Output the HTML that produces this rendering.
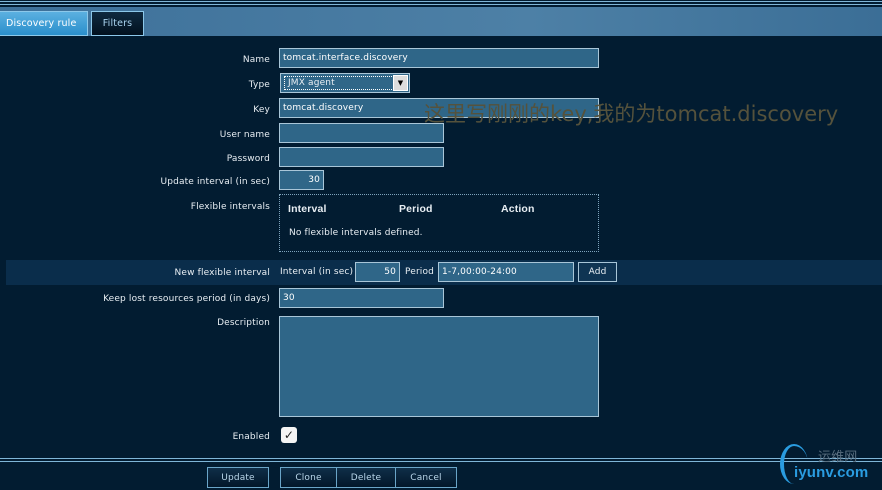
<!DOCTYPE html>
<html><head><meta charset="utf-8"><style>
*{margin:0;padding:0;box-sizing:border-box}
body{width:882px;height:490px;background:#021c31;font-family:"DejaVu Sans","Liberation Sans",sans-serif;font-size:9px;color:#e8eef3;position:relative;overflow:hidden;letter-spacing:0.15px}
.a{position:absolute}
.lbl{position:absolute;right:612px;text-align:right;white-space:nowrap;font-size:9px}
.in{position:absolute;background:#2f6688;border:1px solid #a9c6d8;color:#fff;font-size:9px;padding:0 3px;line-height:19px;white-space:nowrap}
.btn{position:absolute;top:467px;height:21px;border:1px solid #6aa5c8;background:linear-gradient(#0f2e48,#02172a);color:#b9d6ea;font-size:9px;text-align:center;line-height:20px}
</style></head><body>
<div class="a" style="left:0;top:1px;width:882px;height:1px;background:#7fb6d8"></div>
<div class="a" style="left:0;top:4px;width:882px;height:1px;background:#7fb6d8"></div>
<div class="a" style="left:0;top:7px;width:882px;height:29px;background:linear-gradient(90deg,#3d7099,#4d80a6 60%,#3b6e96)"></div>
<div class="a" style="left:0;top:11px;width:88px;height:25px;background:linear-gradient(#5bb0e0,#2a8fcc);border:1px solid #8cc8ea;border-left:none;color:#fff;font-size:9.5px;line-height:24px;padding-left:6px">Discovery rule</div>
<div class="a" style="left:91px;top:11px;width:53px;height:25px;background:linear-gradient(#0f2a40,#02111f);border:1px solid #8cc8ea;color:#a9d3ef;font-size:9.5px;line-height:24px;text-align:center">Filters</div>

<div class="lbl" style="top:55px">Name</div>
<div class="in" style="left:279px;top:48px;width:320px;height:20px">tomcat.interface.discovery</div>
<div class="lbl" style="top:80px">Type</div>
<div class="a" style="left:280px;top:73px;width:130px;height:20px;background:#2f6688;border:1px solid #a9c6d8"><div class="a" style="left:3px;top:2px;width:110px;height:14px;border:1px dotted #fff;font-size:9px;line-height:13px;padding-left:3px">JMX agent</div><div class="a" style="right:1px;top:1px;width:15px;height:16px;background:#ddd;border:1px solid #fff;color:#000;font-size:7px;text-align:center;line-height:14px">▼</div></div>
<div class="lbl" style="top:105px">Key</div>
<div class="in" style="left:279px;top:98px;width:320px;height:20px">tomcat.discovery</div>
<div class="lbl" style="top:130px">User name</div>
<div class="in" style="left:279px;top:123px;width:165px;height:20px"></div>
<div class="lbl" style="top:154px">Password</div>
<div class="in" style="left:279px;top:147px;width:165px;height:20px"></div>
<div class="lbl" style="top:177px">Update interval (in sec)</div>
<div class="in" style="left:279px;top:170px;width:45px;height:20px;text-align:right">30</div>
<div class="lbl" style="top:202px">Flexible intervals</div>
<div class="a" style="left:279px;top:194px;width:320px;height:58px;border:1px dotted #7fa4bd"></div>
<div class="a" style="left:288px;top:203px;font-weight:bold;font-size:10.5px;font-family:'Liberation Sans',sans-serif">Interval</div>
<div class="a" style="left:399px;top:203px;font-weight:bold;font-size:10.5px;font-family:'Liberation Sans',sans-serif">Period</div>
<div class="a" style="left:501px;top:203px;font-weight:bold;font-size:10.5px;font-family:'Liberation Sans',sans-serif">Action</div>
<div class="a" style="left:289px;top:228px">No flexible intervals defined.</div>

<div class="a" style="left:6px;top:260px;width:876px;height:25px;background:#0a2d4b"></div>
<div class="lbl" style="top:268px">New flexible interval</div>
<div class="a" style="left:280px;top:267px">Interval (in sec)</div>
<div class="in" style="left:355px;top:262px;width:45px;height:20px;text-align:right">50</div>
<div class="a" style="left:405px;top:267px">Period</div>
<div class="in" style="left:438px;top:262px;width:136px;height:20px">1-7,00:00-24:00</div>
<div class="a" style="left:578px;top:262px;width:39px;height:20px;border:1px solid #a9c6d8;background:#0f3453;text-align:center;line-height:19px">Add</div>
<div class="lbl" style="top:294px">Keep lost resources period (in days)</div>
<div class="in" style="left:279px;top:288px;width:165px;height:20px">30</div>
<div class="lbl" style="top:318px">Description</div>
<div class="in" style="left:279px;top:316px;width:320px;height:101px"></div>
<div class="lbl" style="top:432px">Enabled</div>
<div class="a" style="left:281px;top:427px;width:16px;height:16px;background:#f4f4f4;border-radius:3px;color:#222;font-size:12px;line-height:16px;text-align:center">✓</div>

<div class="a" style="left:0;top:458px;width:882px;height:1px;background:#7fb6d8"></div>
<div class="a" style="left:0;top:461px;width:882px;height:1px;background:#7fb6d8"></div>
<div class="btn" style="left:207px;width:62px">Update</div>
<div class="btn" style="left:280px;width:57px">Clone</div>
<div class="btn" style="left:336px;width:60px">Delete</div>
<div class="btn" style="left:395px;width:62px">Cancel</div>

<div class="a" style="left:424px;top:98px;font-size:21px;letter-spacing:0;color:#55523c;font-family:'DejaVu Sans','Noto Sans CJK SC',sans-serif;white-space:nowrap">这里写刚刚的key,我的为tomcat.discovery</div>
<div class="a" style="left:780px;top:444px;width:28px;height:40px;border-left:4px solid #2a9ce0;border-top:2px solid #2a9ce0;border-radius:50%"></div>
<div class="a" style="left:818px;top:446px;font-size:13px;color:#5a6f80;font-family:'Noto Sans CJK SC',sans-serif">运维网</div>
<div class="a" style="left:794px;top:464px;font-size:15px;font-weight:bold;color:#2a9ce0;font-family:'Liberation Sans',sans-serif">iyunv.com</div>
</body></html>
